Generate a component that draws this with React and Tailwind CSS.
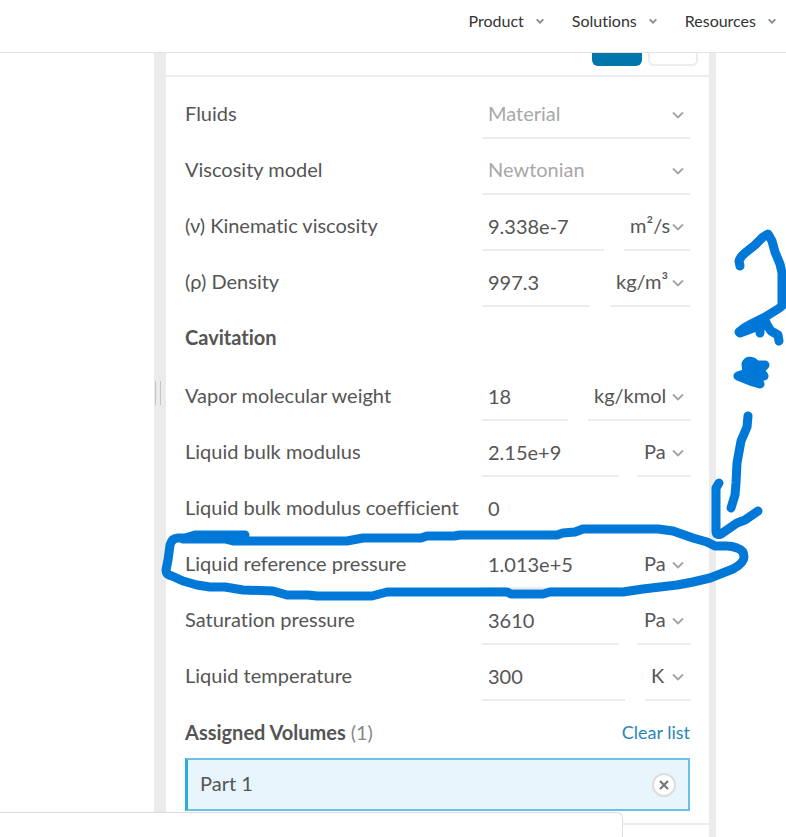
import React, { useState } from 'react';

const menus = ['Product', 'Solutions', 'Resources'];

const models = [
  { id: 'fluids', label: 'Fluids', value: 'Material' },
  { id: 'viscosity-model', label: 'Viscosity model', value: 'Newtonian' },
];

const fluidFields = [
  { id: 'viscosity', label: '(ν) Kinematic viscosity', value: '9.338e-7', unit: 'm²/s', width: 'w-[66px]' },
  { id: 'density', label: '(ρ) Density', value: '997.3', unit: 'kg/m³', width: 'w-20' },
];

const cavitationFields = [
  { id: 'vapor-weight', label: 'Vapor molecular weight', value: '18', unit: 'kg/kmol', width: 'w-[102px]' },
  { id: 'bulk-modulus', label: 'Liquid bulk modulus', value: '2.15e+9', unit: 'Pa', width: 'w-[52px]' },
  { id: 'bulk-coefficient', label: 'Liquid bulk modulus coefficient', value: '0' },
  { id: 'reference-pressure', label: 'Liquid reference pressure', value: '1.013e+5', unit: 'Pa', width: 'w-[52px]' },
  { id: 'saturation-pressure', label: 'Saturation pressure', value: '3610', unit: 'Pa', width: 'w-[52px]' },
  { id: 'temperature', label: 'Liquid temperature', value: '300', unit: 'K', width: 'w-[45px]' },
];

function Chevron({ className }) {
  return (
    <svg viewBox="0 0 12 8" fill="none" stroke="currentColor" className={className} aria-hidden="true">
      <path d="M1 1.5 L6 6.5 L11 1.5" />
    </svg>
  );
}

function Select({ id, label, value, className, textClass }) {
  return (
    <div className={`relative h-12 shrink-0 border-b-2 border-[#ececec] ${className}`}>
      <select
        id={id}
        aria-label={label}
        defaultValue={value}
        className={`h-full w-full appearance-none bg-transparent pb-0.5 pl-1.5 outline-none ${textClass}`}
      >
        <option>{value}</option>
      </select>
      <Chevron className="pointer-events-none absolute top-5 right-1.5 h-2 w-3 stroke-[1.8] text-[#a3a3a3]" />
    </div>
  );
}

function Row({ id, label, children }) {
  return (
    <div className="flex h-14 items-end">
      <label htmlFor={id} className="flex h-12 min-w-0 flex-1 items-center pb-1 whitespace-nowrap">
        {label}
      </label>
      <div className="flex w-[208px] shrink-0 gap-5">{children}</div>
    </div>
  );
}

function FieldRow({ field }) {
  return (
    <Row id={field.id} label={field.label}>
      <input
        id={field.id}
        type="text"
        defaultValue={field.value}
        className={`h-12 min-w-0 flex-1 border-b-2 bg-transparent pl-1.5 outline-none ${
          field.unit ? 'border-[#ececec]' : 'border-transparent'
        }`}
      />
      {field.unit && (
        <Select label={`${field.label} unit`} value={field.unit} className={field.width} textClass="text-[#555]" />
      )}
    </Row>
  );
}

// Hand-drawn marker strokes
function Marker() {
  return (
    <svg
      viewBox="0 53 786 784"
      fill="none"
      stroke="#0078d7"
      strokeWidth="9"
      strokeLinecap="round"
      strokeLinejoin="round"
      className="pointer-events-none absolute top-0 left-0 h-[784px] w-[786px]"
      aria-hidden="true"
    >
      <path d="M740 266 L739 261 Q740 257 745 253 L755 245 L763 237 L768 234 L772 241 L775 252 L780 264 L782 273 V306 L778 309 L765 317 L753 323 L744 328 L739 332" />
      <path fill="#0078d7" d="M740 333 L756 327 L767 325 L765 320 L750 326 Z" />
      <path d="M767 325 L771 331 L778 335 L779 341 M760 333 V329" />
      <path fill="#0078d7" d="M746 364 Q748 360 753 362 L757 365 H765 L760 370 L764 376 L757 378 L760 384 L753 382 L738 376 L747 373 Z" />
      <path d="M748 416 L747 427 L741 441 L737 463 L736 483 L735 495 L731 508" />
      <path d="M719 483 L716 488 V531 Q716 536 721 534 L737 523 L745 520 L758 511" />
      <path d="M245 535 H195 L185 538 H178 Q172 538 170 545 L168 560 L166 570 Q166 575 172 576 L183 581 L197 585 L210 587 H225 L243 590 L273 591 L287 595 H308 L317 596 H372 L387 592 H507 L511 594 H543 L550 592 H623 L643 589 L677 585 L693 582 L710 578 L733 569 Q744 563 744 557 Q744 550 737 548 Q732 546 727 546 H715 L707 542 L693 538 L673 531 L658 529 H583 L575 532 L563 533 L557 535 H460 L454 536 H427 L421 538 H363 L347 541 H233 L225 539 H183" />
    </svg>
  );
}

function App() {
  const [parts, setParts] = useState(['Part 1']);

  return (
    <div className="flex min-h-screen flex-col bg-white font-[Lato,sans-serif] [font-variant-ligatures:none]">
      <header className="relative flex h-[53px] justify-end border-b border-[#e2e2e2] bg-white">
        <nav className="flex gap-7 pr-2.5 pb-2.5">
          {menus.map((menu) => (
            <button key={menu} type="button" className="flex items-center gap-3 text-base text-[#333]">
              {menu}
              <Chevron className="h-1.5 w-2 stroke-[2.8] text-[#8b8b8b]" />
            </button>
          ))}
        </nav>
      </header>

      <main className="relative flex flex-1 pr-[70px] pl-[154px]">
        <div className="flex w-3 shrink-0 items-center gap-1 bg-[#ebebeb] pb-[105px] pl-px">
          <span className="h-6 w-px bg-[#c4c4c4]" />
          <span className="h-6 w-px bg-[#c4c4c4]" />
        </div>

        <section className="min-w-0 flex-1 text-xl text-[#555]">
          <div className="flex h-6 items-start justify-end gap-1.5 border-b-2 border-[#ececec] pr-[11px]">
            <button type="button" aria-label="Save" className="h-[13px] w-[50px] rounded-b-md bg-[#0076ab]" />
            <button type="button" aria-label="Close" className="h-[13px] w-[50px] rounded-b-md border-2 border-t-0 border-[#ececec]" />
          </div>

          <div className="pt-1.5 pr-[19px] pb-3 pl-[19px]">
            {models.map((model) => (
              <Row key={model.id} id={model.id} label={model.label}>
                <Select id={model.id} value={model.value} className="w-full" textClass="text-[#a8a8a8]" />
              </Row>
            ))}
            {fluidFields.map((field) => (
              <FieldRow key={field.id} field={field} />
            ))}

            <h2 className="flex h-[58px] items-end pb-3.5 font-bold">Cavitation</h2>
            {cavitationFields.map((field) => (
              <FieldRow key={field.id} field={field} />
            ))}

            <div className="flex h-[57px] items-end justify-between pb-3">
              <h2 className="font-bold">
                Assigned Volumes <span className="font-normal text-[#888]">({parts.length})</span>
              </h2>
              <button type="button" onClick={() => setParts([])} className="text-lg text-[#2a86b3]">
                Clear list
              </button>
            </div>
            {parts.map((part) => (
              <div
                key={part}
                className="flex h-[53px] items-center justify-between border-2 border-l-[3px] border-[#6bc0ea] border-l-[#2ab0d8] bg-[#e8f5fc] pr-3 pl-3"
              >
                <span className="pb-1">{part}</span>
                <button
                  type="button"
                  aria-label={`Remove ${part}`}
                  onClick={() => setParts(parts.filter((p) => p !== part))}
                  className="flex size-6 items-center justify-center rounded-full border-2 border-[#dcdcdc] bg-white"
                >
                  <svg viewBox="0 0 10 10" className="size-2.5" stroke="#777" strokeWidth="2.2" aria-hidden="true">
                    <path d="M1 1 L9 9 M9 1 L1 9" />
                  </svg>
                </button>
              </div>
            ))}
          </div>
          <div className="border-t-2 border-[#ececec]" />
        </section>

        <div className="w-[7px] shrink-0 bg-[#ebebeb]" />
        <Marker />
      </main>

      <div className="fixed bottom-0 left-0 h-[25px] w-[623px] rounded-tr-md border-t border-r border-[#dcdcdc] bg-white" />
    </div>
  );
}

export default App;
